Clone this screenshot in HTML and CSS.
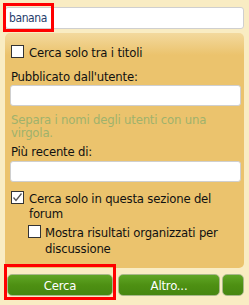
FILE: index.html
```html
<!DOCTYPE html>
<html lang="it">
<head>
    <meta charset="UTF-8">
    <meta name="viewport" content="width=device-width, initial-scale=1.0">
    <title>Cerca</title>
    <link rel="stylesheet" href="styles.css">
</head>
<body>
    <div class="search-box">
        <div class="query">
            <input type="text" class="field query-field" value="banana">
            <div class="mark mark-query"></div>
        </div>

        <div class="options">
            <label class="check first">
                <span class="box"></span>
                <span>Cerca solo tra i titoli</span>
            </label>

            <div class="label">Pubblicato dall'utente:</div>
            <input type="text" class="field">
            <p class="hint">Separa i nomi degli utenti con una virgola.</p>

            <div class="label recent">Più recente di:</div>
            <input type="text" class="field">

            <label class="check section">
                <span class="box">
                    <svg width="11" height="11" viewBox="0 0 11 11"><path d="M1.5 5.5 L4 8.5 L9.5 1.5" fill="none" stroke="#555" stroke-width="1.3"/></svg>
                </span>
                <span>Cerca solo in questa sezione del forum</span>
            </label>

            <label class="check sub">
                <span class="box"></span>
                <span>Mostra risultati organizzati per discussione</span>
            </label>
        </div>

        <div class="buttons">
            <div class="btn-wrap">
                <button class="btn">Cerca</button>
                <div class="mark mark-btn"></div>
            </div>
            <button class="btn wide">Altro...</button>
            <button class="btn small"></button>
        </div>
    </div>
</body>
</html>
```

FILE: styles.css
```css
html, body {
    margin: 0;
    padding: 0;
}
body {
    background: #f9ecc3;
    font-family: "DejaVu Sans Condensed", "DejaVu Sans", Verdana, sans-serif;
    font-stretch: condensed;
    font-size: 13px;
    letter-spacing: -0.2px;
    color: #111;
    width: 249px;
    height: 305px;
    overflow: hidden;
}
.search-box {
    padding: 7px 5px 0 5px;
}
.query {
    position: relative;
}
.field {
    display: block;
    box-sizing: border-box;
    width: 100%;
    height: 21px;
    margin: 0;
    padding: 0 4px;
    border: 1px solid #cfcfcf;
    border-radius: 3px;
    background: #fff;
    font-family: inherit;
    font-size: 12px;
    color: #222;
    outline: none;
}
.query-field {
    height: 22px;
    color: #1f3d6b;
    padding-left: 3px;
    letter-spacing: -0.4px;
}
.mark {
    position: absolute;
    border: 3px solid #f00;
    pointer-events: none;
}
.mark-query {
    left: -2px;
    top: -4px;
    width: 45px;
    height: 23px;
}
.options {
    margin: 4px 0 0 0;
    padding: 12px 3px 11px 5px;
    border-radius: 5px;
    background: linear-gradient(#f3d99e, #ebc36d 22px, #ebc36d);
}
.check {
    display: flex;
    align-items: flex-start;
    gap: 5px;
    line-height: 15px;
}
.check.first {
    margin-bottom: 10px;
}
.check.section {
    margin-top: 9px;
}
.check.sub {
    padding-left: 17px;
    margin-top: 4px;
    gap: 4px;
    line-height: 16px;
}
.box {
    flex: none;
    box-sizing: border-box;
    width: 13px;
    height: 13px;
    margin-left: 1px;
    border: 1px solid #333;
    background: #fff;
    display: flex;
    align-items: center;
    justify-content: center;
}
.label {
    line-height: 14px;
    margin: 0 0 1px 1px;
}
.label.recent {
    margin-bottom: 2px;
}
.hint {
    margin: 7px 0 6px 1px;
    color: #9fb26c;
    line-height: 13px;
}
.buttons {
    display: flex;
    margin-top: 6px;
    padding-left: 2px;
}
.btn-wrap {
    position: relative;
    margin-right: 5px;
}
.btn {
    display: block;
    box-sizing: border-box;
    width: 106px;
    height: 22px;
    padding: 0;
    border: 1px solid #a9b88a;
    border-radius: 5px;
    background: linear-gradient(#5fa625, #4e9013 50%, #468710);
    color: #fff;
    font-family: inherit;
    font-size: 13px;
    letter-spacing: -0.2px;
}
.btn.wide {
    width: 102px;
    margin-right: 2px;
}
.btn.small {
    width: 22px;
}
.mark-btn {
    left: -3px;
    top: -10px;
    width: 106px;
    height: 30px;
}
```
